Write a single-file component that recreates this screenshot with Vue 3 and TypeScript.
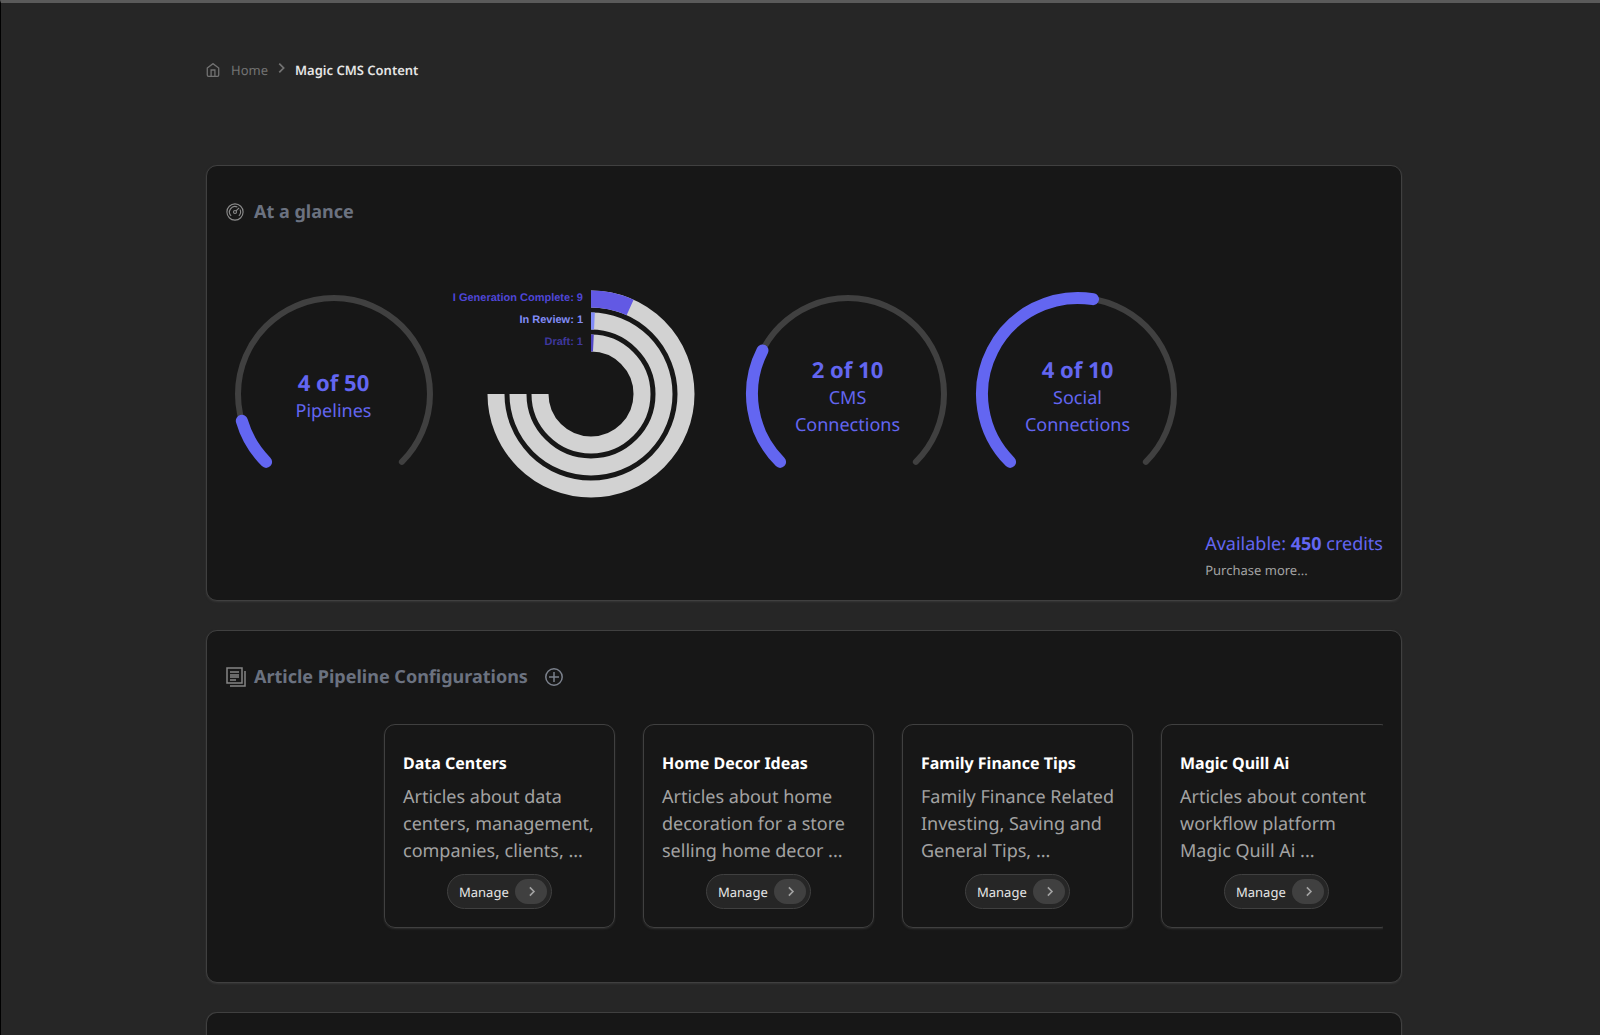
<script setup lang="ts">
interface Gauge {
  used: number
  total: number
  lines: string[]
}

interface Ring {
  label: string
  percent: number
  radius: number
  fill: string
  text: string
}

interface Pipeline {
  title: string
  summary: string
}

const pipelinesGauge: Gauge = { used: 4, total: 50, lines: ['Pipelines'] }
const connectionGauges: Gauge[] = [
  { used: 2, total: 10, lines: ['CMS', 'Connections'] },
  { used: 4, total: 10, lines: ['Social', 'Connections'] },
]

const rings: Ring[] = [
  { label: 'I Generation Complete: 9', percent: 9, radius: 95, fill: '#6259e4', text: '#4f46d8' },
  { label: 'In Review: 1', percent: 1, radius: 73, fill: '#818cf8', text: '#818cf8' },
  { label: 'Draft: 1', percent: 1, radius: 51, fill: '#4f46c4', text: '#3f389e' },
]

const pipelines: Pipeline[] = [
  { title: 'Data Centers', summary: 'Articles about data centers, management, companies, clients, ...' },
  { title: 'Home Decor Ideas', summary: 'Articles about home decoration for a store selling home decor ...' },
  { title: 'Family Finance Tips', summary: 'Family Finance Related Investing, Saving and General Tips, ...' },
  { title: 'Magic Quill Ai', summary: 'Articles about content workflow platform Magic Quill Ai ...' },
]

// Clockwise arc; angles are in degrees from twelve o'clock.
function arc(cx: number, cy: number, r: number, from: number, sweep: number): string {
  const point = (deg: number) => {
    const a = (deg * Math.PI) / 180
    return `${(cx + r * Math.sin(a)).toFixed(2)} ${(cy - r * Math.cos(a)).toFixed(2)}`
  }
  return `M${point(from)}A${r} ${r} 0 ${sweep > 180 ? 1 : 0} 1 ${point(from + sweep)}`
}

const gaugeArc = (sweep: number) => arc(108, 108, 96, 225, sweep)
const ringArc = (r: number, sweep: number) => arc(135, 108, r, 0, sweep)
</script>

<template>
  <div class="page">
    <nav class="breadcrumb" aria-label="Breadcrumb">
      <a href="#" class="home">
        <svg class="home-icon" viewBox="2 1 20 22" aria-hidden="true">
          <path d="M3 9 12 2l9 7v11a2 2 0 0 1-2 2H5a2 2 0 0 1-2-2z" />
          <path d="M9 22V12h6v10" />
        </svg>
        <span>Home</span>
      </a>
      <svg class="crumb-sep" viewBox="0 0 16 16" aria-hidden="true"><path d="m6 3 5 5-5 5" /></svg>
      <span class="current" aria-current="page">Magic CMS Content</span>
    </nav>

    <main class="content">
      <section class="panel glance">
        <h2 class="heading">
          <svg class="gauge-icon" viewBox="0 0 24 24" aria-hidden="true">
            <circle cx="12" cy="12" r="10.800" />
            <path d="M6.800 17.200a7.400 7.400 0 0 1 8.400-11.900M18.700 8.800a7.400 7.400 0 0 1-1.500 8.400M13.400 10.600l4.100-4.100" />
            <circle cx="12" cy="12" r="2" />
          </svg>
          At a glance
        </h2>

        <div class="charts">
          <div class="gauge">
            <svg viewBox="0 0 215 215" aria-hidden="true">
              <path class="track" :d="gaugeArc(270)" />
              <path class="value" :d="gaugeArc((360 * pipelinesGauge.used) / pipelinesGauge.total)" />
            </svg>
            <div class="caption">
              <strong>{{ pipelinesGauge.used }} of {{ pipelinesGauge.total }}</strong>
              <span v-for="line in pipelinesGauge.lines" :key="line">{{ line }}</span>
            </div>
          </div>

          <svg class="rings" viewBox="0 0 269 215" role="img" aria-label="Articles by status">
            <g v-for="(ring, i) in rings" :key="ring.label">
              <path class="ring" stroke="#d2d2d2" :d="ringArc(ring.radius, 270)" />
              <path class="ring" :stroke="ring.fill" :d="ringArc(ring.radius, ring.percent * 2.7)" />
              <text x="127" :y="15 + i * 22" :fill="ring.text">{{ ring.label }}</text>
            </g>
          </svg>

          <div v-for="g in connectionGauges" :key="g.lines[0]" class="gauge">
            <svg viewBox="0 0 215 215" aria-hidden="true">
              <path class="track" :d="gaugeArc(270)" />
              <path class="value" :d="gaugeArc((360 * g.used) / g.total)" />
            </svg>
            <div class="caption">
              <strong>{{ g.used }} of {{ g.total }}</strong>
              <span v-for="line in g.lines" :key="line">{{ line }}</span>
            </div>
          </div>
        </div>

        <div class="credits">
          <div>
            <p class="available">Available: <strong>450</strong> credits</p>
            <a href="#" class="purchase">Purchase more...</a>
          </div>
        </div>
      </section>

      <section class="panel pipelines">
        <h2 class="heading">
          <svg class="article-icon" viewBox="0 0 20 20" aria-hidden="true">
            <path d="M1 1h15v15H1zM19 4v15H4M4 5h9M4 8h9M4 10h9M4 13h6" />
          </svg>
          Article Pipeline Configurations
          <button type="button" class="add" aria-label="Add pipeline">
            <svg viewBox="0 0 18 18" aria-hidden="true">
              <circle cx="9" cy="9" r="8.200" />
              <path d="M9 4v10M4 9h10" />
            </svg>
          </button>
        </h2>

        <div class="carousel">
          <article v-for="p in pipelines" :key="p.title" class="card">
            <h3>{{ p.title }}</h3>
            <p>{{ p.summary }}</p>
            <button type="button" class="manage">
              <span>Manage</span>
              <span class="pill">
                <svg viewBox="0 0 16 16" aria-hidden="true"><path d="m6 3 5 5-5 5" /></svg>
              </span>
            </button>
          </article>
        </div>
      </section>

      <section class="panel next"></section>
    </main>
  </div>
</template>

<style>
body {
  margin: 0;
  background: #262626;
}
</style>

<style scoped>
.page {
  box-sizing: border-box;
  min-height: 100vh;
  display: flex;
  flex-direction: column;
  padding: 57px 198px 0 205px;
  border-left: 1px solid #000;
  border-top: 3px solid #5a5a5a;
  background: #262626;
  font-family: "Noto Sans", sans-serif;
  text-rendering: geometricPrecision;
  color: #a3a3a3;
}
svg {
  display: block;
  fill: none;
  stroke: currentColor;
}
h2, h3, p {
  margin: 0;
}
a {
  color: inherit;
  text-decoration: none;
}
button {
  font: inherit;
  text-rendering: inherit;
  cursor: pointer;
}

.breadcrumb {
  display: flex;
  align-items: center;
  height: 20px;
  font-size: 13px;
  line-height: 20px;
  color: #737373;
}
.home {
  display: flex;
  align-items: center;
  gap: 11px;
}
.home-icon {
  width: 14px;
  height: 14px;
  stroke-width: 2;
}
.crumb-sep {
  width: 14px;
  height: 14px;
  margin: 0 7px 4px 6px;
  stroke-width: 2;
}
.current {
  font-weight: 600;
  color: #e5e5e5;
}

.content {
  flex: 1;
  display: flex;
  flex-direction: column;
  gap: 29px;
  margin-top: 85px;
}
.panel {
  box-sizing: border-box;
  padding: 32px 18px 0 19px;
  border: 1px solid #404040;
  border-radius: 11px;
  background: #171717;
  box-shadow: 0 1px 2px rgba(64, 64, 64, 0.6);
}
.glance {
  height: 436px;
}
.pipelines {
  height: 353px;
}
.next {
  flex: 1;
  border-bottom: 0;
  border-radius: 11px 11px 0 0;
}
.heading {
  display: flex;
  align-items: center;
  height: 28px;
  font-size: 18px;
  line-height: 28px;
  font-weight: 700;
  color: #6b7280;
}
.gauge-icon {
  width: 18px;
  height: 18px;
  margin-right: 10px;
  color: #8a8a8a;
  stroke-width: 1.5;
}
.article-icon {
  width: 20px;
  height: 20px;
  margin-right: 8px;
  color: #858585;
  stroke-width: 1.5;
}
.add {
  margin-left: 17px;
  padding: 0;
  border: 0;
  background: none;
  color: #7b818c;
}
.add svg {
  width: 18px;
  height: 18px;
  stroke-width: 1.5;
}

.charts {
  display: flex;
  gap: 15px;
  margin-top: 60px;
}
.gauge {
  display: grid;
  width: 215px;
  height: 215px;
}
.gauge > * {
  grid-area: 1 / 1;
}
.track {
  stroke: #404040;
  stroke-width: 6;
  stroke-linecap: round;
}
.value {
  stroke: #6366f1;
  stroke-width: 12;
  stroke-linecap: round;
}
.caption {
  display: flex;
  flex-direction: column;
  align-items: center;
  justify-content: center;
  padding-top: 6px;
  font-size: 18px;
  line-height: 27px;
  color: #6366f1;
}
.caption strong {
  font-size: 22px;
  line-height: 30px;
}
.rings {
  width: 269px;
  height: 215px;
  overflow: visible;
}
.ring {
  stroke-width: 17;
}
.rings text {
  stroke: none;
  font: bold 11px "Liberation Sans", sans-serif;
  text-anchor: end;
}
.credits {
  display: flex;
  justify-content: flex-end;
  margin-top: 30px;
}
.available {
  font-size: 18px;
  line-height: 27px;
  color: #6366f1;
}
.purchase {
  display: block;
  font-size: 13px;
  line-height: 25px;
}

.carousel {
  display: flex;
  gap: 28px;
  margin-top: 33px;
  padding: 0 0 4px 158px;
  overflow: hidden;
}
.card {
  box-sizing: border-box;
  flex: none;
  display: flex;
  flex-direction: column;
  width: 231px;
  height: 204px;
  padding: 26px 18px 0;
  border: 1px solid #404040;
  border-radius: 11px;
  box-shadow: 0 1px 2px rgba(64, 64, 64, 0.6);
}
.card h3 {
  font-size: 16px;
  line-height: 25px;
  font-weight: 700;
  color: #fff;
}
.card p {
  margin: 8px -6px 0 0;
  font-size: 18px;
  line-height: 27px;
}
.manage {
  box-sizing: border-box;
  align-self: center;
  display: flex;
  align-items: center;
  justify-content: space-between;
  width: 105px;
  height: 35px;
  margin-top: 9px;
  padding: 0 4px 0 11px;
  border: 1px solid #404040;
  border-radius: 18px;
  background: #262626;
  font-size: 13px;
  line-height: 20px;
  color: #e5e5e5;
}
.pill {
  display: flex;
  align-items: center;
  justify-content: center;
  width: 32px;
  height: 25px;
  border-radius: 13px;
  background: #404040;
  color: #a3a3a3;
}
.pill svg {
  width: 13px;
  height: 13px;
  stroke-width: 2;
}
</style>
